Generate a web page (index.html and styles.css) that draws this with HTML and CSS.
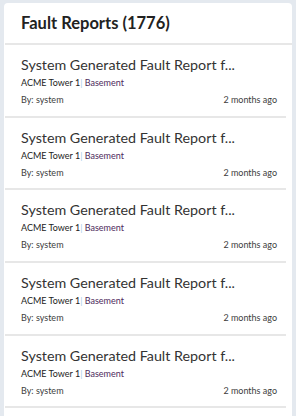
FILE: index.html
```html
<!DOCTYPE html>
<html lang="en">
<head>
  <meta charset="UTF-8" />
  <meta name="viewport" content="width=device-width, initial-scale=1.0" />
  <title>Fault Reports</title>
  <link rel="stylesheet" href="styles.css">
</head>
<body>
  <div class="panel">
    <div class="panel-header">
      <h1>Fault Reports (1776)</h1>
    </div>

    <ul class="report-list">
      <li class="report">
        <div class="report-title">System Generated Fault Report f...</div>
        <div class="report-place">ACME Tower 1<span class="sep">|</span> <span class="level">Basement</span></div>
        <div class="report-meta">
          <span>By: system</span>
          <span>2 months ago</span>
        </div>
      </li>
      <li class="report">
        <div class="report-title">System Generated Fault Report f...</div>
        <div class="report-place">ACME Tower 1<span class="sep">|</span> <span class="level">Basement</span></div>
        <div class="report-meta">
          <span>By: system</span>
          <span>2 months ago</span>
        </div>
      </li>
      <li class="report">
        <div class="report-title">System Generated Fault Report f...</div>
        <div class="report-place">ACME Tower 1<span class="sep">|</span> <span class="level">Basement</span></div>
        <div class="report-meta">
          <span>By: system</span>
          <span>2 months ago</span>
        </div>
      </li>
      <li class="report">
        <div class="report-title">System Generated Fault Report f...</div>
        <div class="report-place">ACME Tower 1<span class="sep">|</span> <span class="level">Basement</span></div>
        <div class="report-meta">
          <span>By: system</span>
          <span>2 months ago</span>
        </div>
      </li>
      <li class="report">
        <div class="report-title">System Generated Fault Report f...</div>
        <div class="report-place">ACME Tower 1<span class="sep">|</span> <span class="level">Basement</span></div>
        <div class="report-meta">
          <span>By: system</span>
          <span>2 months ago</span>
        </div>
      </li>
    </ul>
  </div>
</body>
</html>
```

FILE: styles.css
```css
:root {
  --page-bg: #e4e9ef;
  --card-bg: #ffffff;
  --line: #e7e7e7;
  --text-dark: #222222;
  --text-body: #3a3a3a;
  --pipe: #a9cbe8;
  --level: #4e2a5c;
}

* {
  box-sizing: border-box;
}

html, body {
  height: 100%;
}

body {
  margin: 0;
  padding: 3px 4px 0;
  background: var(--page-bg);
  font-family: Lato, 'Open Sans', sans-serif;
  color: var(--text-body);
  overflow: hidden;
}

.panel {
  background: var(--card-bg);
  border-radius: 4px 4px 0 0;
  min-height: 100%;
  padding-left: 1px;
}

.panel-header {
  height: 42px;
  border-bottom: 2px solid var(--line);
  padding: 0 16px;
  display: flex;
  align-items: center;
}

.panel-header h1 {
  margin: 0;
  font-size: 16.5px;
  font-weight: 700;
  color: var(--text-dark);
}

.report-list {
  list-style: none;
  margin: 0 6px 0 0;
  padding: 0;
}

.report {
  padding: 11px 9px 9.7px 16px;
  border-bottom: 2px solid var(--line);
}

.report-title {
  font-size: 14.3px;
  line-height: 18px;
  color: #333333;
  white-space: nowrap;
}

.report-place {
  margin-top: 2px;
  font-size: 9px;
  line-height: 13px;
  color: var(--text-dark);
}

.report-place .sep {
  color: var(--pipe);
}

.report-place .level {
  color: var(--level);
}

.report-meta {
  margin-top: 4px;
  display: flex;
  justify-content: space-between;
  font-size: 9px;
  line-height: 13px;
  color: #3d3d3d;
}
```
